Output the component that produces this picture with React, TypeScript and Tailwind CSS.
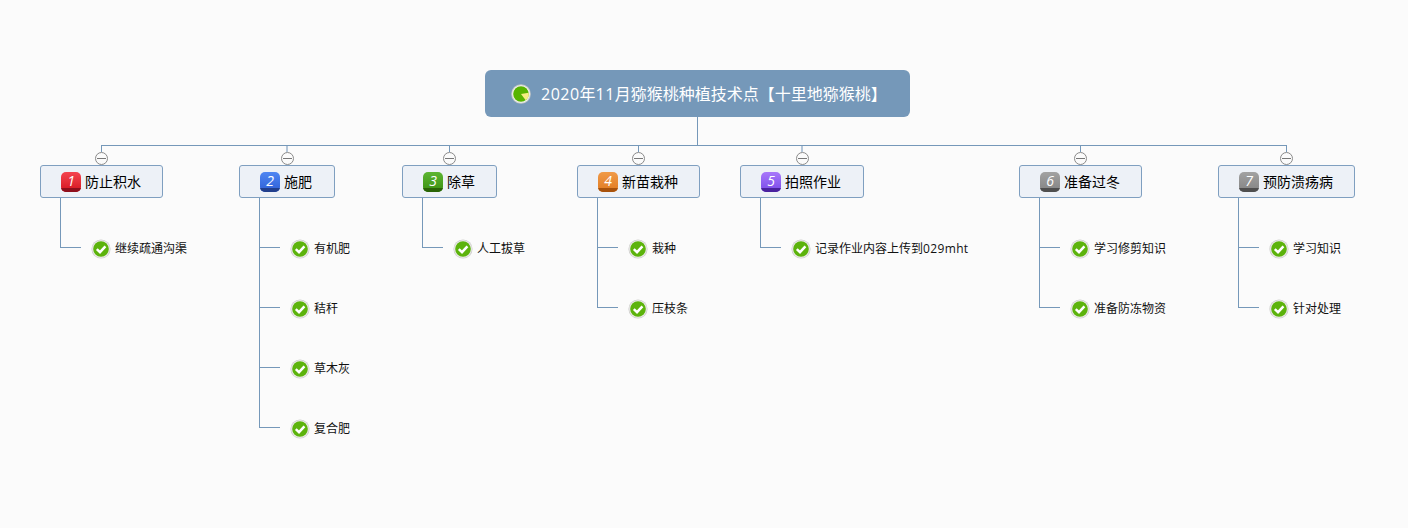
// App.tsx
const branches = [
  { n: "1", title: "防止积水", col: "w-[199px]", node: "w-[123px]", stub: "w-px bg-[#7598b9]", badge: "from-[#f4434f] to-[#d40c1c]", band: "bg-[#8e0f1c]", leaves: ["继续疏通沟渠"] },
  { n: "2", title: "施肥", col: "w-[163px]", node: "w-[96px]", stub: "w-[2px] bg-[#b4c6d9]", badge: "from-[#4f86f2] to-[#2f5fd6]", band: "bg-[#223f8c]", leaves: ["有机肥", "秸秆", "草木灰", "复合肥"] },
  { n: "3", title: "除草", col: "w-[175px]", node: "w-[95px]", stub: "w-px bg-[#7598b9]", badge: "from-[#5cb531] to-[#3c9010]", band: "bg-[#2a6406]", leaves: ["人工拔草"] },
  { n: "4", title: "新苗栽种", col: "w-[163px]", node: "w-[123px]", stub: "w-px bg-[#7598b9]", badge: "from-[#f09a48] to-[#e07a1c]", band: "bg-[#a8520c]", leaves: ["栽种", "压枝条"] },
  { n: "5", title: "拍照作业", col: "w-[279px]", node: "w-[124px]", stub: "w-[2px] bg-[#b4c6d9]", badge: "from-[#a878fa] to-[#7a48e8]", band: "bg-[#4a229e]", leaves: ["记录作业内容上传到029mht"] },
  { n: "6", title: "准备过冬", col: "w-[199px]", node: "w-[123px]", stub: "w-px bg-[#7598b9]", badge: "from-[#a2a2a2] to-[#838383]", band: "bg-[#4f4f4f]", leaves: ["学习修剪知识", "准备防冻物资"] },
  { n: "7", title: "预防溃疡病", col: "w-[137px]", node: "w-[137px]", stub: "w-px bg-[#7598b9]", badge: "from-[#a2a2a2] to-[#838383]", band: "bg-[#4f4f4f]", leaves: ["学习知识", "针对处理"] },
];

// latin runs sit a little wider in the reference font
function Spaced({ text }: { text: string }) {
  return (
    <>
      {text.split(/([0-9a-z]+)/).map((part, i) =>
        i % 2 === 1 ? (
          <span key={i} className="tracking-[0.03em]">{part}</span>
        ) : (
          part
        ),
      )}
    </>
  );
}

function CheckIcon() {
  return (
    <svg viewBox="0 0 20 20" className="w-5 h-5 shrink-0">
      <circle cx="10" cy="10" r="9.6" fill="#cfcfcd" />
      <circle cx="10" cy="10" r="8.8" fill="#ececea" />
      <circle cx="10" cy="10" r="7.8" fill="#5cb30c" />
      <path d="M5.8 10.2 L9 13.2 L14.4 7.4" fill="none" stroke="#fff" strokeWidth="2.5" />
    </svg>
  );
}

function ProgressIcon() {
  return (
    <svg viewBox="0 0 20 20" className="w-5 h-5 shrink-0">
      <circle cx="10" cy="10" r="9.8" fill="#c9cbc8" />
      <circle cx="10" cy="10" r="8.8" fill="#f4f4f2" />
      <circle cx="10" cy="10" r="7.8" fill="#57b400" />
      <path d="M10 10 L17.7 8.8 A7.8 7.8 0 0 1 14.7 16.2 Z" fill="#f5ee80" />
    </svg>
  );
}

function Collapse() {
  return (
    <div className="w-[13px] h-[13px] rounded-full border border-[#8a8a8a] bg-[#fbfbfb] flex items-center justify-center">
      <div className="w-[9px] h-px bg-[#777]" />
    </div>
  );
}

function Branch({ b }: { b: (typeof branches)[number] }) {
  return (
    <div className={`${b.col} shrink-0`}>
      <div className="flex w-fit flex-col items-center">
        <div className={`${b.stub} h-[6px]`} />
        <Collapse />
        <div className={`${b.node} h-[33px] pl-5 flex items-center border border-[#7f9fc0] rounded-[3px] bg-[#edf1f7] whitespace-nowrap`}>
          <div className={`relative w-5 h-5 rounded-[5px] overflow-hidden bg-gradient-to-b ${b.badge} flex items-center justify-center`}>
            <div className={`absolute bottom-0 inset-x-0 h-1 ${b.band}`} />
            <span className="relative -mt-px text-[14px] leading-none italic font-medium text-white">{b.n}</span>
          </div>
          <span className="ml-[4px] text-[14px] text-black">{b.title}</span>
        </div>
      </div>
      <div className="relative ml-5 pt-5">
        {/* trunk runs from node bottom down to the last leaf */}
        <div className="absolute left-0 top-0 w-px bg-[#7598b9]" style={{ height: 50 + (b.leaves.length - 1) * 60 }} />
        {b.leaves.map((leaf) => (
          <div key={leaf} className="h-[60px] flex items-center whitespace-nowrap">
            <div className="w-[21px] h-px mb-[2px] bg-[#7598b9]" />
            <div className="ml-[10px] mt-px"><CheckIcon /></div>
            <span className="ml-1 mt-px text-[12px] text-[#111]"><Spaced text={leaf} /></span>
          </div>
        ))}
      </div>
    </div>
  );
}

export default function App() {
  return (
    <div className="w-[1408px] h-[528px] overflow-hidden bg-[#fbfbfb] pt-[70px] font-['Open_Sans','Noto_Sans_CJK_SC',sans-serif]">
      <div className="ml-[485px] w-[425px] h-[47px] pl-[26px] flex items-center rounded-[6px] bg-[#7598b9] whitespace-nowrap">
        <ProgressIcon />
        <span className="ml-[10px] mt-px text-[16px] text-white">
          <Spaced text="2020年11月猕猴桃种植技术点【十里地猕猴桃】" />
        </span>
      </div>
      <div className="ml-[697px] w-px h-[28px] bg-[#7598b9]" />
      <div className="ml-[101px] w-[1186px] h-px bg-[#7598b9]" />
      <div className="ml-10 flex">
        {branches.map((b) => (
          <Branch key={b.n} b={b} />
        ))}
      </div>
    </div>
  );
}
